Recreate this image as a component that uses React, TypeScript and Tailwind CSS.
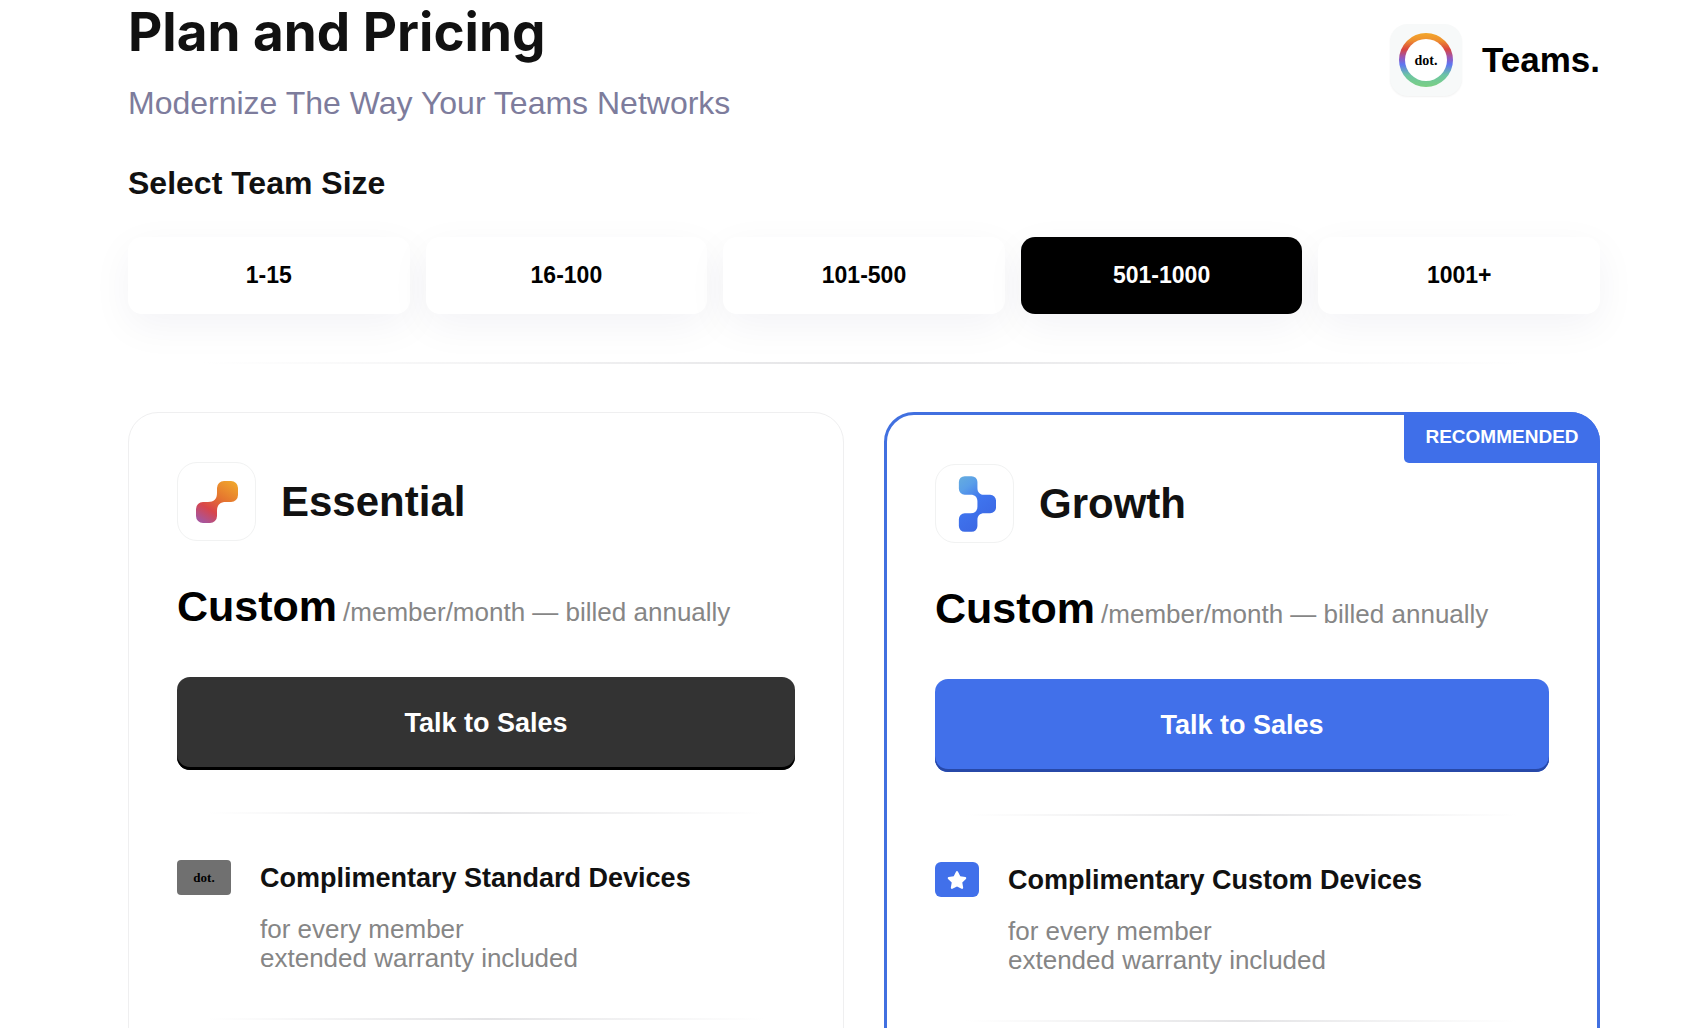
import { useState } from "react";
import type { ReactNode } from "react";
import { FaStar } from "react-icons/fa";

const teamSizes = ["1-15", "16-100", "101-500", "501-1000", "1001+"];

function Divider() {
  return (
    <hr className="h-[2px] w-full border-0 bg-linear-to-r from-transparent from-5% via-[#e4e4e6] to-transparent to-95%" />
  );
}

function DotLogo() {
  return (
    <div className="flex size-[72px] items-center justify-center rounded-[18px] bg-[#f7f9f9] shadow-[0_1px_2px_rgba(0,0,0,0.06)]">
      <svg viewBox="0 0 54 54" className="size-[54px]" aria-label="dot.">
        <defs>
          <linearGradient id="ring" x1="0" y1="0" x2="0" y2="1">
            <stop offset="0" stopColor="#f3a72b" />
            <stop offset="0.14" stopColor="#ee8f2f" />
            <stop offset="0.3" stopColor="#d9453f" />
            <stop offset="0.45" stopColor="#9a56b5" />
            <stop offset="0.58" stopColor="#5f74f2" />
            <stop offset="0.78" stopColor="#6cc5a4" />
            <stop offset="1" stopColor="#7bcf82" />
          </linearGradient>
        </defs>
        <circle cx="27" cy="27" r="27" fill="url(#ring)" />
        <circle cx="27" cy="27" r="21" fill="#fff" />
        <text
          x="27"
          y="32"
          textAnchor="middle"
          fontSize="14"
          fontWeight="700"
          className="font-['Liberation_Serif',serif]"
        >
          dot.
        </text>
      </svg>
    </div>
  );
}

function EssentialMark() {
  return (
    <svg viewBox="0 0 42 42" className="size-[42px]" aria-hidden="true">
      <defs>
        <linearGradient id="warm" gradientUnits="userSpaceOnUse" x1="36" y1="0" x2="9" y2="42">
          <stop offset="0" stopColor="#f0a52c" />
          <stop offset="0.4" stopColor="#e5762f" />
          <stop offset="0.72" stopColor="#d8454b" />
          <stop offset="1" stopColor="#a8559b" />
        </linearGradient>
      </defs>
      <path
        fill="url(#warm)"
        d="M28 0h7a7 7 0 0 1 7 7v7a7 7 0 0 1-7 7h-5c-6 0-9 3-9 9v5a7 7 0 0 1-7 7h-7a7 7 0 0 1-7-7v-7a7 7 0 0 1 7-7h5c6 0 9-3 9-9v-5a7 7 0 0 1 7-7z"
      />
    </svg>
  );
}

function GrowthMark() {
  return (
    <svg viewBox="-6 0 44 57" className="h-14 w-[43px]" aria-hidden="true">
      <defs>
        <linearGradient id="cool" x1="0.1" y1="0" x2="0.6" y2="1">
          <stop offset="0" stopColor="#64abe0" />
          <stop offset="0.2" stopColor="#5a9fe8" />
          <stop offset="0.5" stopColor="#3f74ee" />
          <stop offset="1" stopColor="#3b66e2" />
        </linearGradient>
      </defs>
      <path
        fill="url(#cool)"
        d="M6 0h7a6 6 0 0 1 6 6v6c0 4.500 2.500 7 7 7h6a6 6 0 0 1 6 6v7a6 6 0 0 1-6 6h-6c-4.500 0-7 2.500-7 7v6a6 6 0 0 1-6 6h-7a6 6 0 0 1-6-6v-7a6 6 0 0 1 6-6h6c4.500 0 7-2.500 7-7v-5c0-4.500-2.500-7-7-7h-6a6 6 0 0 1-6-6v-7a6 6 0 0 1 6-6z"
      />
    </svg>
  );
}

type PlanProps = {
  name: string;
  mark: ReactNode;
  badge: ReactNode;
  device: string;
  recommended?: boolean;
};

function PlanCard({ name, mark, badge, device, recommended = false }: PlanProps) {
  return (
    <article
      className={
        recommended
          ? "relative rounded-[30px] border-[3px] border-[#4170e0] bg-white px-12 pt-[49px] pb-12"
          : "relative rounded-[30px] border border-[#efeff0] bg-white px-12 pt-[49px] pb-12"
      }
    >
      {recommended ? (
        <span className="absolute -top-[3px] -right-[3px] flex h-[51px] w-[196px] items-center justify-center rounded-tr-[30px] rounded-bl-[5px] bg-[#3f6fe9] text-[19px] font-bold text-white">
          RECOMMENDED
        </span>
      ) : null}

      <div className="flex items-center gap-[25px]">
        <div className="flex size-[79px] items-center justify-center rounded-[20px] border border-[#f1f2f2]">
          {mark}
        </div>
        <h3 className="text-[42px] leading-[48px] font-bold text-[#111]">{name}</h3>
      </div>

      <p className="mt-[37px] flex items-baseline gap-1.5 leading-[56px] whitespace-nowrap">
        <strong className="text-[43px] font-bold text-black">Custom</strong>
        <span className="text-[26px] text-[#868686]">/member/month — billed annually</span>
      </p>

      <button
        type="button"
        className={
          recommended
            ? "mt-[37px] mb-[42px] h-[93px] w-full rounded-[13px] bg-[#4170ea] text-[27px] font-bold text-white shadow-[inset_0_-3px_0_#2748a8]"
            : "mt-[37px] mb-[42px] h-[93px] w-full rounded-[13px] bg-[#333] text-[27px] font-bold text-white shadow-[inset_0_-3px_0_#000]"
        }
      >
        Talk to Sales
      </button>

      <Divider />
      <div className="flex gap-[29px] pt-[46px] pb-[45px]">
        {badge}
        <div>
          <h4 className="text-[27px] leading-9 font-bold text-[#111]">{device}</h4>
          <p className="mt-[19px] text-[26px] leading-[29px] text-[#868686]">
            for every member
            <br />
            extended warranty included
          </p>
        </div>
      </div>
      <Divider />
    </article>
  );
}

export default function App() {
  const [size, setSize] = useState("501-1000");

  return (
    <main className="h-screen overflow-hidden bg-white pr-[90px] pl-32 font-['Liberation_Sans',Arial,sans-serif]">
      <header className="flex items-start justify-between">
        <div>
          <h1 className="font-['Inter',sans-serif] text-[53px] leading-[64px] font-bold text-[#111]">
            Plan and Pricing
          </h1>
          <p className="mt-5 text-[32px] leading-[38px] text-[#7d7c9c]">
            Modernize The Way Your Teams Networks
          </p>
        </div>
        <div className="mt-6 flex items-center gap-5">
          <DotLogo />
          <span className="text-[35px] font-bold text-black">Teams.</span>
        </div>
      </header>

      <section className="mt-[42px]">
        <h2 className="text-[32px] leading-[38px] font-bold text-[#111]">Select Team Size</h2>
        <div className="mt-[35px] mb-12 grid grid-cols-5 gap-4">
          {teamSizes.map((item) => (
            <button
              key={item}
              type="button"
              aria-pressed={item === size}
              onClick={() => setSize(item)}
              className={
                item === size
                  ? "h-[77px] rounded-[14px] bg-black text-[23px] font-bold text-white shadow-[0_12px_40px_rgba(20,20,80,0.05)]"
                  : "h-[77px] rounded-[14px] bg-white text-[23px] font-bold text-black shadow-[0_12px_40px_rgba(20,20,80,0.05)]"
              }
            >
              {item}
            </button>
          ))}
        </div>
        <Divider />
      </section>

      <section className="mt-12 grid grid-cols-2 gap-10">
        <PlanCard
          name="Essential"
          mark={<EssentialMark />}
          device="Complimentary Standard Devices"
          badge={
            <span className="flex h-[35px] w-[54px] items-center justify-center rounded-[4px] bg-[#707070] font-['Liberation_Serif',serif] text-[13px] font-bold text-black">
              dot.
            </span>
          }
        />
        <PlanCard
          name="Growth"
          mark={<GrowthMark />}
          device="Complimentary Custom Devices"
          recommended
          badge={
            <span className="flex h-[35px] w-11 items-center justify-center rounded-[6px] bg-[#4170ea] text-white">
              <FaStar size={20} />
            </span>
          }
        />
      </section>
    </main>
  );
}
